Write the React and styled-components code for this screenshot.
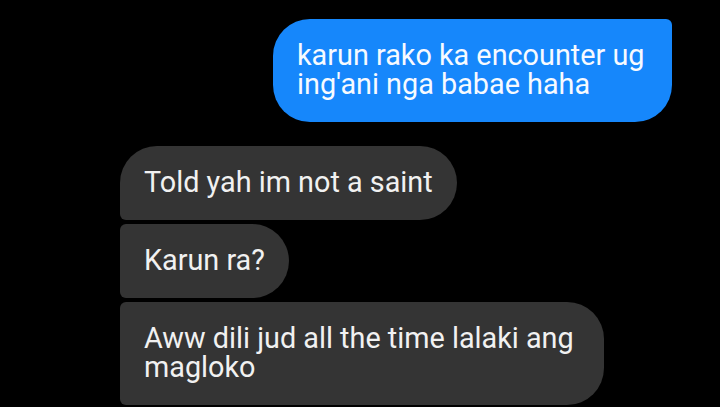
import React from 'react'
import styled, { createGlobalStyle, css } from 'styled-components'

const GlobalStyle = createGlobalStyle`
  html, body {
    margin: 0;
    padding: 0;
    background: #000;
  }
  body {
    font-family: Roboto, "Noto Sans", "Liberation Sans", sans-serif;
    -webkit-font-smoothing: antialiased;
  }
`

const Thread = styled.div`
  width: 720px;
  height: 407px;
  overflow: hidden;
  background: #000;
  box-sizing: border-box;
  padding: 19px 48px 0 120px;
  display: flex;
  flex-direction: column;
`

const Group = styled.div`
  display: flex;
  flex-direction: column;
  align-items: ${({ $mine }) => ($mine ? 'flex-end' : 'flex-start')};
  gap: 4px;
  margin-bottom: 24px;
`

const BIG = '37px'
const SMALL = '6px'

const Bubble = styled.div`
  box-sizing: border-box;
  padding: 22px 24px 23px;
  font-size: 28.8px;
  line-height: 29px;
  letter-spacing: 0;
  ${({ $mine }) =>
    $mine
      ? css`
          max-width: 399px;
          background: #1687fb;
          color: #f7faff;
        `
      : css`
          max-width: 484px;
          background: #343434;
          color: #f1f1f1;
        `}
  border-radius: ${({ $tl, $tr, $br, $bl }) =>
    `${$tl ? SMALL : BIG} ${$tr ? SMALL : BIG} ${$br ? SMALL : BIG} ${$bl ? SMALL : BIG}`};
`

const messages = [
  { mine: true, text: "karun rako ka encounter ug ing'ani nga babae haha" },
  { mine: false, text: 'Told yah im not a saint' },
  { mine: false, text: 'Karun ra?' },
  { mine: false, text: 'Aww dili jud all the time lalaki ang magloko' },
]

const groupMessages = (list) => {
  const groups = []
  list.forEach((m) => {
    const last = groups[groups.length - 1]
    if (last && last.mine === m.mine) last.items.push(m)
    else groups.push({ mine: m.mine, items: [m] })
  })
  return groups
}

const App = () => {
  const groups = groupMessages(messages)
  return (
    <>
      <GlobalStyle />
      <Thread>
        {groups.map((g, gi) => (
          <Group key={gi} $mine={g.mine}>
            {g.items.map((m, i) => {
              const first = i === 0
              const last = i === g.items.length - 1
              // an earlier outgoing bubble is cut off by the top of the frame
              const continuesAbove = !first || (g.mine && gi === 0)
              // the incoming group runs past the bottom of the frame
              const continuesBelow = !last || (!g.mine && gi === groups.length - 1)
              return (
                <Bubble
                  key={i}
                  $mine={m.mine}
                  $tl={!m.mine && continuesAbove}
                  $bl={!m.mine && continuesBelow}
                  $tr={m.mine && continuesAbove}
                >
                  {m.text}
                </Bubble>
              )
            })}
          </Group>
        ))}
      </Thread>
    </>
  )
}

export default App
